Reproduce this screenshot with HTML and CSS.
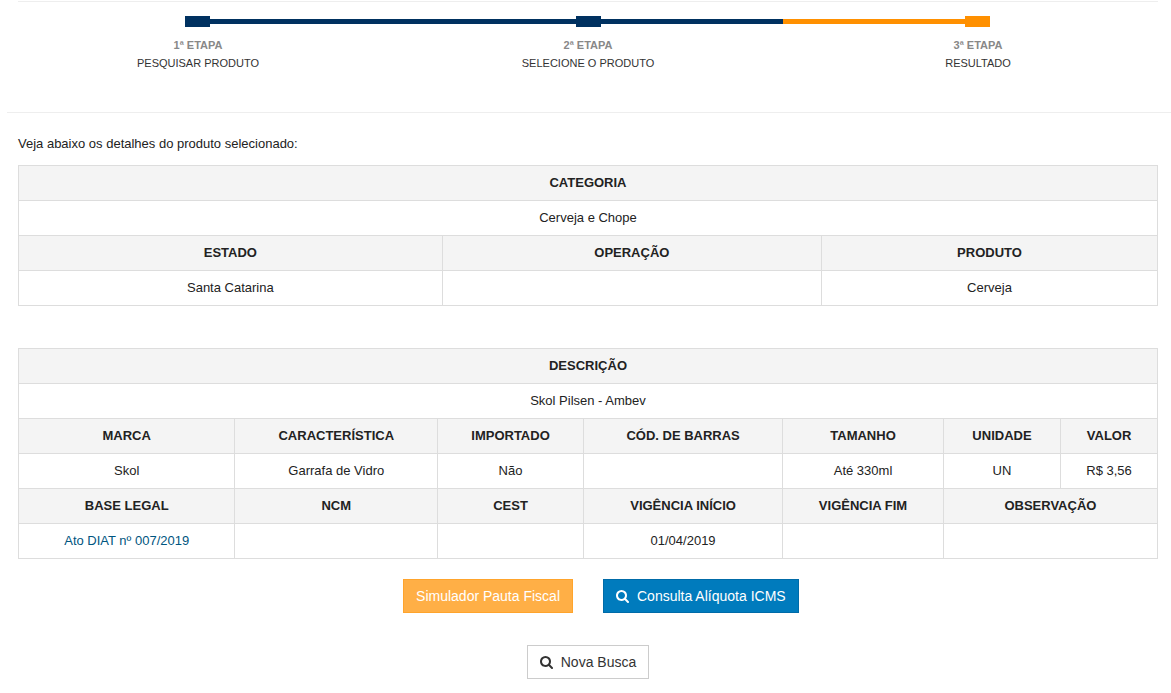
FILE: index.html
```html
<!DOCTYPE html>
<html lang="pt-BR">
<head>
<meta charset="utf-8">
<meta name="viewport" content="width=device-width, initial-scale=1">
<title>Resultado</title>
<link rel="stylesheet" href="styles.css">
</head>
<body>
<svg class="sprite" aria-hidden="true">
  <symbol id="search" viewBox="0 128 1664 1664">
    <path d="M1152 832q0-185-131.500-316.500t-316.500-131.500-316.500 131.500-131.500 316.500 131.500 316.500 316.500 131.500 316.500-131.500 131.500-316.500zm512 832q0 52-38 90t-90 38q-54 0-90-38l-343-342q-179 124-399 124-143 0-273.500-55.500t-225-150-150-225-55.500-273.500 55.500-273.500 150-225 225-150 273.500-55.500 273.500 55.500 225 150 150 225 55.500 273.500q0 220-124 399l343 343q37 37 37 90z"/>
  </symbol>
</svg>
<main class="page">
  <ol class="steps">
    <li class="step">
      <div class="track"><span class="line line-none"></span><span class="dot"></span><span class="line line-after"></span></div>
      <strong class="step-number">1ª ETAPA</strong>
      <span class="step-name">PESQUISAR PRODUTO</span>
    </li>
    <li class="step">
      <div class="track"><span class="line line-before"></span><span class="dot"></span><span class="line line-after"></span></div>
      <strong class="step-number">2ª ETAPA</strong>
      <span class="step-name">SELECIONE O PRODUTO</span>
    </li>
    <li class="step step-current">
      <div class="track"><span class="line line-before"></span><span class="dot"></span><span class="line line-none"></span></div>
      <strong class="step-number">3ª ETAPA</strong>
      <span class="step-name">RESULTADO</span>
    </li>
  </ol>
  <hr class="divider">
  <p class="intro">Veja abaixo os detalhes do produto selecionado:</p>
  <table class="details">
    <colgroup>
      <col class="col-state"><col class="col-operation"><col>
    </colgroup>
    <tbody>
      <tr><th colspan="3">CATEGORIA</th></tr>
      <tr><td colspan="3">Cerveja e Chope</td></tr>
      <tr><th>ESTADO</th><th>OPERAÇÃO</th><th>PRODUTO</th></tr>
      <tr><td>Santa Catarina</td><td></td><td>Cerveja</td></tr>
    </tbody>
  </table>
  <table class="details">
    <colgroup>
      <col class="col-brand"><col class="col-feature"><col class="col-imported"><col class="col-barcode"><col class="col-size"><col class="col-unit"><col>
    </colgroup>
    <tbody>
      <tr><th colspan="7">DESCRIÇÃO</th></tr>
      <tr><td colspan="7">Skol Pilsen - Ambev</td></tr>
      <tr><th>MARCA</th><th>CARACTERÍSTICA</th><th>IMPORTADO</th><th>CÓD. DE BARRAS</th><th>TAMANHO</th><th>UNIDADE</th><th>VALOR</th></tr>
      <tr><td>Skol</td><td>Garrafa de Vidro</td><td>Não</td><td></td><td>Até 330ml</td><td>UN</td><td>R$ 3,56</td></tr>
      <tr><th>BASE LEGAL</th><th>NCM</th><th>CEST</th><th>VIGÊNCIA INÍCIO</th><th>VIGÊNCIA FIM</th><th colspan="2">OBSERVAÇÃO</th></tr>
      <tr><td><a class="law" href="#">Ato DIAT nº 007/2019</a></td><td></td><td></td><td>01/04/2019</td><td></td><td colspan="2"></td></tr>
    </tbody>
  </table>
  <div class="actions">
    <button type="button" class="btn btn-orange">Simulador Pauta Fiscal</button>
    <button type="button" class="btn btn-blue"><svg class="icon" aria-hidden="true"><use href="#search"/></svg>Consulta Alíquota ICMS</button>
  </div>
  <div class="again">
    <button type="button" class="btn btn-plain"><svg class="icon" aria-hidden="true"><use href="#search"/></svg>Nova Busca</button>
  </div>
</main>
</body>
</html>
```
FILE: styles.css
```css
* {
  box-sizing: border-box;
}

body {
  margin: 0;
  background: #fff;
  color: #222;
  font: 13px/18px "Liberation Sans", Arial, sans-serif;
}

.sprite {
  display: none;
}

.page {
  padding: 1px 13px 14px 18px;
}

.steps {
  display: grid;
  grid-template-columns: repeat(3, 1fr);
  gap: 30px;
  margin: 0;
  padding: 14px 0 40px;
  border-top: 1px solid #eee;
  list-style: none;
}

.step {
  display: flex;
  flex-direction: column;
  align-items: center;
  font-size: 11px;
  color: #333;
  --step-color: #003160;
}

.step-current {
  --step-color: #ff9000;
}

.track {
  display: flex;
  align-items: center;
  align-self: stretch;
  height: 11px;
  margin-bottom: 9px;
}

.line {
  flex: 1;
  height: 5px;
  background: var(--step-color);
}

.line-none {
  background: none;
}

.line-before {
  margin-left: -15px;
}

.line-after {
  margin-right: -15px;
}

/* Outer ends balance the lines that reach into the column gaps. */
.line-none:first-child {
  margin-left: -16px;
}

.line-none:last-child {
  margin-right: -13px;
}

.dot {
  width: 25px;
  height: 11px;
  background: var(--step-color);
}

.step-number {
  color: #888;
}

.divider {
  height: 1px;
  margin: 0 -13px 0 -11px;
  border: 0;
  background: #eee;
}

.intro {
  margin: 22px 0 12px;
}

.details {
  width: 100%;
  margin-bottom: 42px;
  border-collapse: collapse;
  table-layout: fixed;
  text-align: center;
}

.col-state { width: 37.2%; }
.col-operation { width: 33.3%; }
.col-brand { width: 19%; }
.col-feature { width: 17.8%; }
.col-imported { width: 12.8%; }
.col-barcode { width: 17.5%; }
.col-size { width: 14.1%; }
.col-unit { width: 10.3%; }

.details th,
.details td {
  height: 35px;
  padding: 8px;
  border: 1px solid #ddd;
}

.details th {
  background: #f4f4f4;
}

.details + .details {
  margin-bottom: 20px;
}

.law {
  color: #005580;
  text-decoration: none;
}

.actions {
  display: grid;
  grid-template-columns: 1fr 1fr;
  gap: 30px;
}

.again {
  display: flex;
  justify-content: center;
  margin-top: 32px;
}

.btn {
  display: inline-flex;
  align-items: center;
  gap: 8px;
  padding: 6px 12px;
  border: 1px solid;
  font: 14px/20px "Liberation Sans", Arial, sans-serif;
  cursor: pointer;
}

.btn-orange {
  justify-self: end;
  background: #ffaf46;
  border-color: #ffa42c;
  color: #fff;
}

.btn-blue {
  justify-self: start;
  background: #007bbd;
  border-color: #006ba8;
  color: #fff;
}

.btn-plain {
  background: #fff;
  border-color: #ccc;
  color: #333;
}

.icon {
  width: 13px;
  height: 13px;
  fill: currentColor;
}
```
